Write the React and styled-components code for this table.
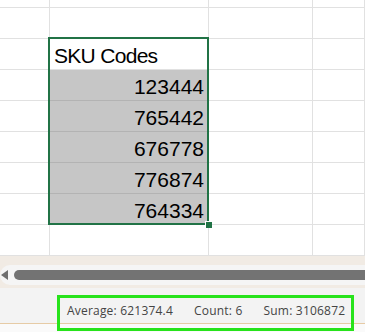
import React from 'react';
import styled, { createGlobalStyle } from 'styled-components';

const Global = createGlobalStyle`
    html, body {
        margin: 0;
        padding: 0;
        background: #ffffff;
        overflow: hidden;
    }
`;

const Window = styled.div`
    width: 365px;
    height: 332px;
    display: flex;
    flex-direction: column;
    background: #fafafa;
    overflow: hidden;
`;

const SheetArea = styled.div`
    position: relative;
    height: 256px;
    flex: none;
    background: #ffffff;
`;

const Grid = styled.div`
    display: grid;
    grid-template-columns: 50px 159px 104px 1fr;
    grid-template-rows: 8px repeat(8, 31px);
`;

const Cell = styled.div`
    box-sizing: border-box;
    display: flex;
    align-items: flex-end;
    justify-content: ${p => (p.$right ? 'flex-end' : 'flex-start')};
    padding: 0 4px 1px 4px;
    border-right: 1px solid #e1e1e1;
    border-bottom: 1px solid ${p => (p.$shaded ? '#b3b3b3' : '#e1e1e1')};
    background: ${p => (p.$shaded ? '#c6c6c6' : '#ffffff')};
    font-family: "Liberation Sans", Arial, sans-serif;
    font-size: 21px;
    line-height: 24px;
    color: #000000;
    white-space: nowrap;
`;

const Label = styled.span`
    letter-spacing: -0.7px;
`;

const Selection = styled.div`
    position: absolute;
    left: 48px;
    top: 37px;
    width: 161px;
    height: 188px;
    box-sizing: border-box;
    border: 2px solid #217346;
    pointer-events: none;
`;

const Handle = styled.div`
    position: absolute;
    right: -5px;
    bottom: -5px;
    width: 6px;
    height: 6px;
    background: #217346;
    border: 1px solid #ffffff;
    border-right: none;
    border-bottom: none;
`;

const ScrollBand = styled.div`
    height: 32px;
    flex: none;
    box-sizing: border-box;
    padding: 9px 0 3px 0;
    background: #f1ebe4;
`;

const Track = styled.div`
    height: 20px;
    display: flex;
    align-items: center;
    gap: 6px;
    padding-left: 1px;
    background: #f5f5f5;
    border-radius: 10px 0 0 10px;
`;

const Arrow = styled.div`
    width: 0;
    height: 0;
    border-top: 5px solid transparent;
    border-bottom: 5px solid transparent;
    border-right: 7px solid #6f6f6f;
`;

const Thumb = styled.div`
    flex: 1;
    height: 10px;
    background: #737373;
    border-radius: 5px 0 0 5px;
`;

const StatusBar = styled.div`
    position: relative;
    height: 36px;
    flex: none;
    box-sizing: border-box;
    display: flex;
    align-items: flex-start;
    padding: 15px 0 0 67px;
    gap: 21px;
    background: #f3f3f3;
    border-bottom: 1px solid #e6cba6;
    font-family: "Open Sans", "Noto Sans", sans-serif;
    font-size: 12px;
    letter-spacing: 0.2px;
    color: #444444;
`;

const StatusItem = styled.span`
    line-height: 16px;
    white-space: nowrap;
`;

const Highlight = styled.div`
    position: absolute;
    left: 57px;
    top: 7px;
    width: 297px;
    height: 36px;
    box-sizing: border-box;
    border: 3px solid #27e31b;
`;

const values = ['123444', '765442', '676778', '776874', '764334'];

const EmptyRow = () => (
    <>
        <Cell />
        <Cell />
        <Cell />
        <Cell />
    </>
);

const App = () => (
    <Window>
        <Global />
        <SheetArea>
            <Grid>
                <EmptyRow />
                <EmptyRow />
                <Cell />
                <Cell><Label>SKU Codes</Label></Cell>
                <Cell />
                <Cell />
                {values.map(v => (
                    <React.Fragment key={v}>
                        <Cell />
                        <Cell $shaded $right>{v}</Cell>
                        <Cell />
                        <Cell />
                    </React.Fragment>
                ))}
                <EmptyRow />
            </Grid>
            <Selection>
                <Handle />
            </Selection>
        </SheetArea>
        <ScrollBand>
            <Track>
                <Arrow />
                <Thumb />
            </Track>
        </ScrollBand>
        <StatusBar>
            <StatusItem>Average: 621374.4</StatusItem>
            <StatusItem>Count: 6</StatusItem>
            <StatusItem>Sum: 3106872</StatusItem>
            <Highlight />
        </StatusBar>
    </Window>
);

export default App;
